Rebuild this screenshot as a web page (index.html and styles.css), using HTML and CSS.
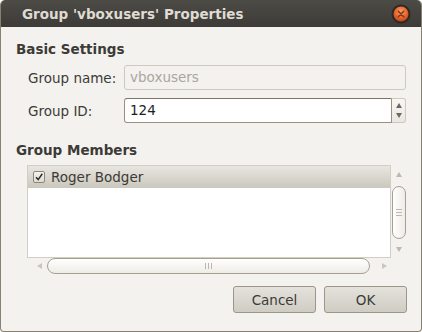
FILE: index.html
```html
<!DOCTYPE html>
<html lang="en">
<head>
    <meta charset="UTF-8">
    <title>Group 'vboxusers' Properties</title>
    <link rel="stylesheet" href="styles.css">
</head>
<body>

<div class="window">
    <div class="titlebar">
        <span class="title">Group 'vboxusers' Properties</span>
        <svg class="close" width="20" height="20" viewBox="0 0 20 20">
            <defs>
                <radialGradient id="orange" cx="50%" cy="35%" r="60%">
                    <stop offset="0" stop-color="#f8a070"/>
                    <stop offset="0.6" stop-color="#ee6a2e"/>
                    <stop offset="1" stop-color="#c9481a"/>
                </radialGradient>
            </defs>
            <circle cx="10" cy="10" r="9.5" fill="#2b2a26"/>
            <circle cx="10" cy="10" r="7.5" fill="url(#orange)"/>
            <path d="M7.3 7.3 L12.7 12.7 M12.7 7.3 L7.3 12.7" stroke="#7a3a1c" stroke-width="1.6" stroke-linecap="round"/>
        </svg>
    </div>

    <div class="content">
        <h3 class="section">Basic Settings</h3>
        <div class="form">
            <label class="label">Group name:</label>
            <div class="entry disabled">vboxusers</div>

            <label class="label">Group ID:</label>
            <div class="spin">
                <div class="entry active">124</div>
                <div class="spin-buttons">
                    <span class="arrow up dark"></span>
                    <span class="arrow down dark"></span>
                </div>
            </div>
        </div>

        <h3 class="section members">Group Members</h3>
        <div class="list-wrap">
            <div class="list">
                <div class="row">
                    <span class="check">
                        <svg width="10" height="10" viewBox="0 0 10 10">
                            <path d="M2 5.2 L4.2 7.6 L8.3 1.8" fill="none" stroke="#2e2d2a" stroke-width="1.5"/>
                        </svg>
                    </span>
                    Roger Bodger
                </div>
            </div>
            <div class="vscroll">
                <span class="arrow up"></span>
                <div class="vthumb">
                    <span class="grip-h"></span>
                    <span class="grip-h"></span>
                    <span class="grip-h"></span>
                </div>
                <span class="arrow down"></span>
            </div>
            <div class="hscroll">
                <span class="arrow left"></span>
                <div class="hthumb">
                    <span class="grip-v"></span>
                    <span class="grip-v"></span>
                    <span class="grip-v"></span>
                </div>
                <span class="arrow right"></span>
            </div>
        </div>

        <div class="buttons">
            <button class="btn">Cancel</button>
            <button class="btn">OK</button>
        </div>
    </div>
</div>

</body>
</html>
```

FILE: styles.css
```css
body {
    margin: 0;
    padding: 0;
    background-color: #ffffff;
    font-family: 'DejaVu Sans', sans-serif;
    font-size: 13.5px;
    color: #3c3b37;
}

.window {
    width: 422px;
    height: 332px;
    box-sizing: border-box;
    display: flex;
    flex-direction: column;
    border-radius: 5px 5px 4px 4px;
    overflow: hidden;
    background-color: #f3f2ee;
    border: 1px solid #8a8072;
    border-top: none;
}

.titlebar {
    height: 27px;
    flex: none;
    margin: 0 -1px;
    display: flex;
    align-items: center;
    justify-content: space-between;
    padding: 0 11px 0 22px;
    background: linear-gradient(#4d4b46, #3c3b37);
    border-radius: 5px 5px 0 0;
}

.title {
    color: #dfdbd2;
    font-weight: bold;
    font-size: 13.5px;
}

.close {
    display: block;
}

.content {
    flex: 1;
    padding: 14px 15px 0 15px;
    display: flex;
    flex-direction: column;
}

.section {
    margin: 0;
    font-size: 13.5px;
    line-height: 16px;
    font-weight: bold;
    color: #3c3b37;
}

.section.members {
    margin-top: 19px;
}

.form {
    display: grid;
    grid-template-columns: 108px 1fr;
    row-gap: 8px;
    align-items: center;
    margin-top: 8px;
}

.label {
    padding-left: 12px;
}

.entry {
    height: 25px;
    box-sizing: border-box;
    padding: 0 5px;
    line-height: 23px;
    border-radius: 3px;
}

.entry.disabled {
    border: 1px solid #cdc9bf;
    color: #a9a69f;
}

.entry.active {
    flex: 1;
    border: 1px solid #9a9080;
    border-top-color: #7e7466;
    border-radius: 3px 0 0 3px;
    background-color: #ffffff;
    color: #1e1e1e;
}

.spin {
    display: flex;
}

.spin-buttons {
    width: 13px;
    border: 1px solid #cdc9bf;
    border-left: none;
    border-radius: 0 3px 3px 0;
    background: linear-gradient(#f8f7f4, #e9e7e1);
    display: flex;
    flex-direction: column;
    justify-content: space-around;
    align-items: center;
    padding: 2px 0;
}

.arrow {
    width: 0;
    height: 0;
    display: block;
    border: 3px solid transparent;
}

.arrow.up {
    border-top: none;
    border-bottom: 5px solid #bdb8ae;
}

.arrow.down {
    border-bottom: none;
    border-top: 5px solid #bdb8ae;
}

.arrow.left {
    border-left: none;
    border-right: 5px solid #cac6bd;
}

.arrow.right {
    border-right: none;
    border-left: 5px solid #cac6bd;
}

.arrow.dark.up {
    border-bottom-color: #6d6960;
}

.arrow.dark.down {
    border-top-color: #6d6960;
}

.list-wrap {
    margin-top: 7px;
    margin-left: 11px;
    display: grid;
    grid-template-columns: 1fr 15px;
    grid-template-rows: 93px 16px;
}

.list {
    border: 1px solid #d2cec4;
    background-color: #ffffff;
}

.row {
    height: 22px;
    display: flex;
    align-items: center;
    padding-left: 5px;
    gap: 6px;
    background: linear-gradient(#e8e6e0, #cac7bd);
    color: #3c3b37;
}

.check {
    width: 10px;
    height: 10px;
    border: 1px solid #8c877c;
    border-radius: 2px;
    background: linear-gradient(#f4f3f0, #dedbd3);
    display: flex;
}

.vscroll {
    display: flex;
    flex-direction: column;
    align-items: center;
    justify-content: space-between;
    padding: 7px 0 6px;
}

.vthumb {
    width: 14px;
    height: 53px;
    box-sizing: border-box;
    margin-left: 1px;
    border: 1px solid #a79f92;
    border-radius: 8px;
    background: linear-gradient(90deg, #ffffff, #eeece7);
    display: flex;
    flex-direction: column;
    align-items: center;
    justify-content: center;
    gap: 2px;
}

.grip-h {
    width: 6px;
    height: 1px;
    background-color: #bdb7ab;
}

.hscroll {
    grid-column: 1 / 3;
    display: flex;
    align-items: center;
    padding-left: 10px;
    gap: 5px;
}

.hscroll .arrow.right {
    margin-left: 7px;
}

.hthumb {
    width: 323px;
    height: 16px;
    box-sizing: border-box;
    border: 1px solid #a79f92;
    border-radius: 8px;
    background: linear-gradient(#ffffff, #eeece7);
    display: flex;
    justify-content: center;
    align-items: center;
    gap: 2px;
}

.grip-v {
    width: 1px;
    height: 6px;
    background-color: #bdb7ab;
}

.buttons {
    margin-top: 12px;
    margin-right: -1px;
    display: flex;
    justify-content: flex-end;
    gap: 8px;
}

.btn {
    width: 83px;
    height: 27px;
    font-family: 'DejaVu Sans', sans-serif;
    font-size: 13.5px;
    color: #3c3b37;
    border: 1px solid #9d9587;
    border-radius: 3px;
    background: linear-gradient(#e4e2dc, #cfccc3);
}
```
